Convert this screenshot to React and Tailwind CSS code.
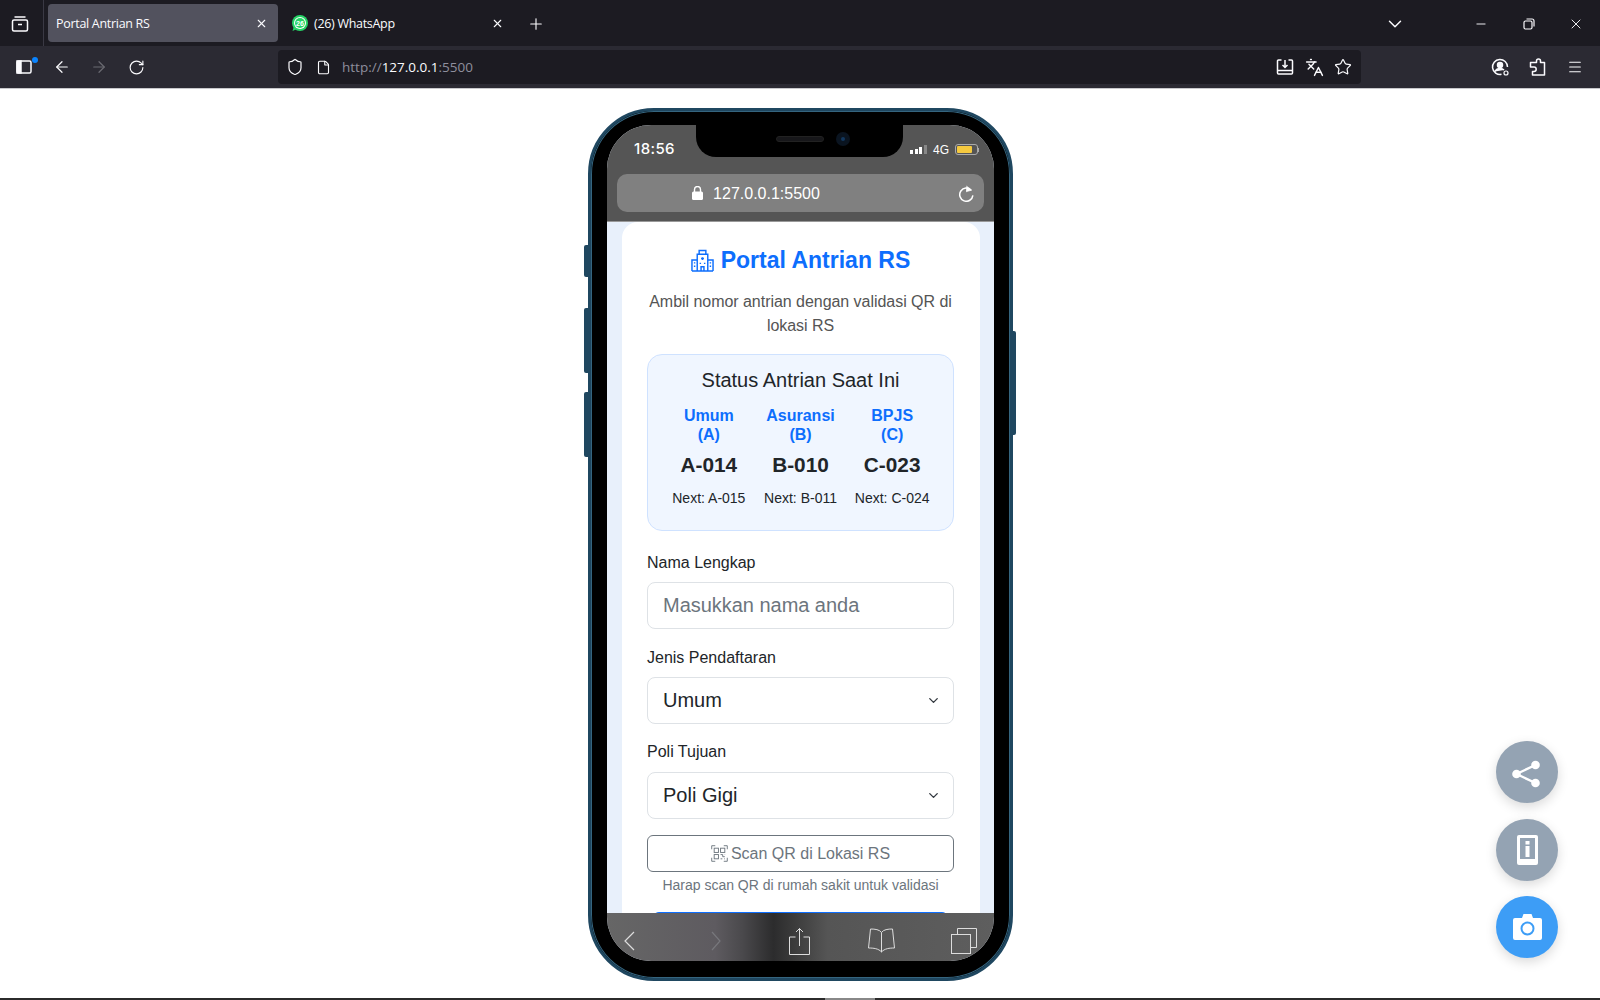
import React from "react";
import { ArrowLeft, ArrowRight, RotateCw, X, Plus, ChevronDown, Star, Menu, Minus, Shield, File, Languages } from "lucide-react";

const Hospital = ({ className }) => (
  <svg viewBox="0 0 24 24" className={className} fill="none" stroke="currentColor" strokeWidth="1.5">
    <path d="M1 23V11.500h5.500M23 23V11.500h-5.500M6.500 23V5.500h11V23M8.500 5.500V1.500h7v4M1 23h22" />
    <path d="M10.500 23v-4.500h3V23M10.500 10h3M12 8.500v3" />
    <path d="M3 14.500h1.500M3 18h1.500M19.500 14.500H21M19.500 18H21M9 15h1.500M13.500 15H15" />
  </svg>
);

const Qr = ({ className }) => (
  <svg viewBox="0 0 24 24" className={className} fill="none" stroke="currentColor" strokeWidth="1.3">
    <path d="M1 6V1h5M18 1h5v5M23 18v5h-5M6 23H1v-5" />
    <rect x="4.500" y="4.500" width="6" height="6" />
    <rect x="13.500" y="4.500" width="6" height="6" />
    <rect x="4.500" y="13.500" width="6" height="6" />
    <path d="M13.500 13.500h3v3h3M13.500 19.500h2.500M19.500 13.500v.5M19.500 19.500h-1" />
  </svg>
);

function TabBar() {
  return (
    <div className="h-[46px] bg-[#1c1b22] flex items-center text-[#fbfbfe] shrink-0">
      <div className="w-[44px] h-full flex items-center justify-center border-r border-[#3a3944] pr-[4px] pt-[1px]">
        <svg viewBox="0 0 18 18" className="w-[18px] h-[18px]" fill="none" stroke="currentColor" strokeWidth="1.5">
          <rect x="1.500" y="5" width="15" height="11" rx="1.500" />
          <path d="M3.500 2h11M7 9.500h4" />
        </svg>
      </div>
      <div className="ml-[4px] w-[230px] h-[38px] rounded-[4px] bg-[#52525e] flex items-center pl-[8px] pr-[10px] justify-between">
        <span className="text-[12.5px] tracking-[-0.3px] pt-[2px]">Portal Antrian RS</span>
        <X className="w-[13px] h-[13px]" strokeWidth={2} />
      </div>
      <div className="w-[236px] h-[38px] flex items-center pl-[13px] pr-[10px]">
        <svg viewBox="0 0 18 18" className="w-[18px] h-[18px] mr-[5px]">
          <circle cx="9" cy="9" r="8" fill="#25d366" />
          <path d="M1.500 17l1.500-5 3 3z" fill="#25d366" />
          <circle cx="9" cy="9" r="6" fill="#fff" />
          <circle cx="9" cy="9" r="5" fill="#25d366" />
          <text x="9" y="11.500" fontSize="7" fontWeight="700" textAnchor="middle" fill="#fff" fontFamily="'Liberation Sans', sans-serif">26</text>
        </svg>
        <span className="text-[12.5px] flex-1 tracking-[-0.3px] pt-[2px]">(26) WhatsApp</span>
        <X className="w-[13px] h-[13px]" strokeWidth={2} />
      </div>
      <Plus className="ml-[13px] w-[18px] h-[18px] mt-[1px]" strokeWidth={1.5} />
      <div className="flex-1" />
      <ChevronDown className="w-[22px] h-[22px] mr-[68px] mt-[1px]" strokeWidth={1.6} />
      <Minus className="w-[14px] h-[14px] mr-[35px] mt-[1px]" strokeWidth={1.6} />
      <svg viewBox="0 0 12 12" className="w-[12px] h-[12px] mr-[33px] mt-[1px]" fill="none" stroke="currentColor" strokeWidth="1.200">
        <rect x="1" y="3" width="8" height="8" rx="1.500" />
        <path d="M3.500 1h5.500a2 2 0 0 1 2 2v5.500" />
      </svg>
      <X className="w-[16px] h-[16px] mr-[16px] mt-[1px]" strokeWidth={1.4} />
    </div>
  );
}

function Toolbar() {
  return (
    <div className="h-[43px] bg-[#2b2a33] flex items-center text-[#fbfbfe] shrink-0 border-b border-[#c8c8cc]">
      <div className="w-[48px] flex items-center justify-center relative">
        <svg viewBox="0 0 16 14" className="w-[16px] h-[14px]" fill="none" stroke="currentColor" strokeWidth="1.500">
          <rect x="1" y="1" width="14" height="12" rx="1.500" />
          <rect x="1" y="1" width="4" height="12" fill="currentColor" />
        </svg>
        <span className="absolute right-[10px] -top-[3px] w-[6px] h-[6px] rounded-full bg-[#0a84ff]" />
      </div>
      <ArrowLeft className="w-[18px] h-[18px] ml-[5px]" strokeWidth={1.6} />
      <ArrowRight className="w-[18px] h-[18px] ml-[19px] text-[#6a6a72]" strokeWidth={1.6} />
      <RotateCw className="w-[17px] h-[17px] ml-[20px]" strokeWidth={1.6} />
      <div className="ml-[133px] w-[1083px] h-[34px] rounded-[4px] bg-[#1c1b22] flex items-center pl-[8px] pr-[9px]">
        <Shield className="w-[18px] h-[18px]" strokeWidth={1.6} />
        <File className="w-[15px] h-[15px] ml-[12px]" strokeWidth={1.8} />
        <span className="ml-[11px] text-[13.5px] text-[#8f8f9d]">http://<span className="text-[#fbfbfe]">127.0.0.1</span>:5500</span>
        <div className="flex-1" />
        <svg viewBox="0 0 18 18" className="w-[18px] h-[18px] mr-[11px]" fill="none" stroke="currentColor" strokeWidth="1.500">
          <path d="M5.500 2H2.500a1 1 0 0 0-1 1v12a1 1 0 0 0 1 1h13a1 1 0 0 0 1-1V3a1 1 0 0 0-1-1h-3M1.500 12.500h15" />
          <path d="M9 2v7M6.500 7L9 9.500 11.500 7" />
        </svg>
        <Languages className="w-[19px] h-[19px] mr-[10px]" strokeWidth={1.8} />
        <Star className="w-[18px] h-[18px]" strokeWidth={1.6} />
      </div>
      <div className="flex-1" />
      <svg viewBox="0 0 20 20" className="w-[20px] h-[20px] mr-[18px]" fill="none" stroke="currentColor" strokeWidth="1.500">
        <path d="M17.500 10a7.500 7.500 0 1 0-6 7.300" />
        <circle cx="10" cy="8" r="2.500" fill="currentColor" />
        <path d="M5 14.500c1-2 3-3 5-3s3 .4 4 1.500" fill="currentColor" />
        <circle cx="16" cy="16" r="2" strokeWidth="1.200" />
      </svg>
      <svg viewBox="0 0 18 18" className="w-[18px] h-[18px] mr-[21px]" fill="none" stroke="currentColor" strokeWidth="1.500" strokeLinejoin="round">
        <path d="M8.500 4.500V3a2 2 0 0 1 4 0v1.500h4V17H4.500v-3.500H6a2.200 2.200 0 0 0 0-4.400H2.500V4.500z" />
      </svg>
      <Menu className="w-[16px] h-[16px] mr-[17px]" strokeWidth={1.6} />
    </div>
  );
}

function StatusCol({ a, b, code, next }) {
  return (
    <div className="flex-1 flex flex-col items-center">
      <div className="text-[16px] leading-[19px] font-bold text-[#0d6efd] text-center">{a}<br />{b}</div>
      <div className="mt-[8px] text-[20.8px] leading-[26px] font-bold text-[#212529]">{code}</div>
      <div className="mt-[10px] text-[14px] leading-[21px] text-[#212529] whitespace-nowrap">{next}</div>
    </div>
  );
}

function Field({ label, children }) {
  return (
    <div>
      <div className="text-[16px] leading-[24px] text-[#212529]">{label}</div>
      {children}
    </div>
  );
}

function Select({ value, mt }) {
  return (
    <div className={"h-[47px] rounded-[8px] border border-[#dee2e6] bg-white flex items-center pl-[15px] pr-[12px] justify-between " + mt}>
      <span className="text-[20px] text-[#212529] pb-[2px]">{value}</span>
      <ChevronDown className="w-[15px] h-[15px] text-[#343a40]" strokeWidth={2.2} />
    </div>
  );
}

function Phone() {
  return (
    <div className="relative ml-[1px] w-[425px] h-[873px] rounded-[66px] bg-black border-[3px] border-[#1f4760] shadow-[inset_0_0_0_1px_#35657f] pl-[16px] pr-[16px] pt-[14px] pb-[17px]">
      <span className="absolute -left-[7px] top-[134px] w-[4px] h-[32px] bg-[#1f4760] rounded-l-[2px]" />
      <span className="absolute -left-[7px] top-[197px] w-[4px] h-[65px] bg-[#1f4760] rounded-l-[2px]" />
      <span className="absolute -left-[7px] top-[281px] w-[4px] h-[65px] bg-[#1f4760] rounded-l-[2px]" />
      <span className="absolute -right-[6px] top-[220px] w-[3px] h-[104px] bg-[#1f4760] rounded-r-[2px]" />
      <div className="relative w-full h-full rounded-[44px] overflow-hidden flex flex-col bg-[#e8f0fb]">
        <div className="h-[97px] shrink-0 bg-[#555555] flex flex-col border-b border-[#999]">
          <div className="h-[49px] flex items-center justify-between pl-[27px] pr-[15px]">
            <span className="font-['Inter',sans-serif] text-[15px] font-medium text-white tracking-[0.4px]">18:56</span>
            <div className="flex items-center gap-[6px]">
              <div className="flex items-end gap-[1.5px] h-[9px]">
                <span className="w-[3px] h-[4px] bg-white" />
                <span className="w-[3px] h-[5.5px] bg-white" />
                <span className="w-[3px] h-[7.5px] bg-white" />
                <span className="w-[3px] h-[9px] bg-[#888]" />
              </div>
              <span className="text-[12px] text-white">4G</span>
              <div className="flex items-center">
                <div className="w-[23px] h-[11px] rounded-[3px] border border-[#aaa] p-[1px]">
                  <div className="w-[15px] h-full bg-[#f5c93f] rounded-[1px]" />
                </div>
                <span className="w-[1px] h-[4px] bg-[#aaa]" />
              </div>
            </div>
          </div>
          <div className="mx-[10px] h-[38px] rounded-[10px] bg-[#808080] flex items-center justify-between pr-[10px]">
            <div className="flex-1 flex items-center justify-center pr-[63px] text-white gap-[10px]">
              <svg viewBox="0 0 11 14" className="w-[11px] h-[14px]" fill="none">
                <rect x="0" y="5.500" width="11" height="8.500" rx="1.500" fill="currentColor" />
                <path d="M2.500 6V3.500a3 3 0 0 1 6 0V6" stroke="currentColor" strokeWidth="1.400" />
              </svg>
              <span className="text-[16px] pt-[1px]">127.0.0.1:5500</span>
            </div>
            <svg viewBox="0 0 17 18" className="w-[16px] h-[17px] text-white" fill="none" stroke="currentColor" strokeWidth="1.600">
              <path d="M14 5.500A7 7 0 1 0 15.800 11" />
              <path d="M9 1l5.500 4.500L8.500 7.200" fill="currentColor" strokeWidth="0.600" />
            </svg>
          </div>
        </div>
        <div className="flex-1 min-h-0 overflow-hidden pl-[15px] pr-[14px]">
          <div className="bg-white rounded-t-[16px] pl-[25px] pr-[26px] pt-[24px] h-full">
            <div className="flex items-center justify-center gap-[7px] text-[#0d6efd]">
              <Hospital className="w-[23px] h-[23px]" />
              <span className="text-[23px] leading-[29px] font-bold">Portal Antrian RS</span>
            </div>
            <p className="mt-[15px] text-[16px] leading-[24px] tracking-[-0.04px] text-[#555] text-center">Ambil nomor antrian dengan validasi QR di lokasi RS</p>
            <div className="mt-[16px] h-[177px] rounded-[15px] bg-[#f0f6ff] border border-[#cfe2ff] px-[15px] pt-[12px]">
              <div className="text-[20px] leading-[26px] text-[#212529] text-center">Status Antrian Saat Ini</div>
              <div className="mt-[13px] flex">
                <StatusCol a="Umum" b="(A)" code="A-014" next="Next: A-015" />
                <StatusCol a="Asuransi" b="(B)" code="B-010" next="Next: B-011" />
                <StatusCol a="BPJS" b="(C)" code="C-023" next="Next: C-024" />
              </div>
            </div>
            <div className="mt-[20px]">
              <Field label="Nama Lengkap">
                <div className="mt-[7px] h-[47px] rounded-[8px] border border-[#dee2e6] bg-white flex items-center pl-[15px]">
                  <span className="text-[20px] tracking-[-0.03px] text-[#6c757d] pb-[1px]">Masukkan nama anda</span>
                </div>
              </Field>
            </div>
            <div className="mt-[17px]"><Field label="Jenis Pendaftaran"><Select value="Umum" mt="mt-[7px]" /></Field></div>
            <div className="mt-[16px]"><Field label="Poli Tujuan"><Select value="Poli Gigi" mt="mt-[8px]" /></Field></div>
            <div className="mt-[16px] h-[37px] rounded-[6px] border border-[#6c757d] flex items-center justify-center gap-[3px] text-[#6c757d]">
              <Qr className="w-[17px] h-[17px]" />
              <span className="text-[16px]">Scan QR di Lokasi RS</span>
            </div>
            <div className="mt-[3px] text-[14px] leading-[21px] text-[#6c757d] text-center">Harap scan QR di rumah sakit untuk validasi</div>
            <div className="mt-[16px] mx-[6px] h-[10px] rounded-t-[6px] bg-[#0d6efd]" />
          </div>
        </div>
        <div className="h-[48px] shrink-0 bg-[linear-gradient(90deg,#666_0%,#5e5b60_28%,#4a494c_35%,#2c2c2d_43%,#3a3a3a_48%,#555_57%,#5e5e5e_100%)] relative z-10 flex items-center pt-[7px] text-[#ddd]">
          <svg viewBox="0 0 11 20" className="w-[11px] h-[20px] ml-[17px] shrink-0" fill="none" stroke="currentColor" strokeWidth="1.200"><path d="M10 1L1 10l9 9" /></svg>
          <svg viewBox="0 0 10 20" className="w-[10px] h-[20px] ml-[76px] shrink-0 text-[#77777c]" fill="none" stroke="currentColor" strokeWidth="1.200"><path d="M1 1l8 9-8 9" /></svg>
          <svg viewBox="0 0 21 28" className="w-[21px] h-[28px] ml-[68px] shrink-0" fill="none" stroke="currentColor" strokeWidth="1"><path d="M6.500 10H.5v17.500h20V10H14.500M10.500 19V1.500M7 5l3.500-3.500L14 5" /></svg>
          <svg viewBox="0 0 27 25" className="w-[27px] h-[25px] ml-[58px] shrink-0" fill="none" stroke="currentColor" strokeWidth="1"><path d="M13.500 4.500C11.500 1.500 7 1 2.500 1L.5 20c5 0 10 .5 13 4 3-3.500 8-4 13-4L24.500 1C20 1 15.500 1.500 13.500 4.500zM13.500 4.500V24" /></svg>
          <svg viewBox="0 0 26 26" className="w-[26px] h-[26px] ml-[56px] shrink-0" fill="none" stroke="currentColor" strokeWidth="1"><rect x=".5" y="6.500" width="19" height="19" /><path d="M6.500 6.500V.5h19v19h-6" /></svg>
        </div>
        <div className="absolute top-0 left-[89px] w-[207px] h-[32px] bg-black rounded-b-[20px] flex items-center justify-center gap-[12px] pl-[27px] pb-[4px]">
          <span className="w-[48px] h-[6px] rounded-full bg-[#17171a] border border-[#222]" />
          <span className="w-[14px] h-[14px] rounded-full bg-[#0a1420] flex items-center justify-center"><span className="w-[4px] h-[4px] rounded-full bg-[#12375e]" /></span>
        </div>
      </div>
    </div>
  );
}

function Fab({ bg, children }) {
  return (
    <div className={"w-[62px] h-[62px] rounded-full flex items-center justify-center shadow-[0_4px_12px_rgba(0,0,0,0.15)] " + bg}>
      {children}
    </div>
  );
}

export default function App() {
  return (
    <div className="w-[1600px] h-[1000px] relative overflow-hidden flex flex-col bg-white font-['Liberation_Sans',Arial,sans-serif]">
      <div className="font-['Open_Sans',sans-serif]">
        <TabBar />
        <Toolbar />
      </div>
      <div className="flex-1 flex justify-center pt-[19px]">
        <Phone />
      </div>
      <div className="h-[2px] bg-[#2b2b2b] shrink-0 flex">
        <span className="ml-[825px] w-[50px] h-full bg-[#888]" />
      </div>
      <div className="absolute left-[1496px] top-[741px] flex flex-col gap-[15.5px]">
        <Fab bg="bg-[#94a3b3]">
          <svg viewBox="0 0 28 28" className="w-[28px] h-[28px] -ml-[3px] mt-[3px]" fill="#fff">
            <circle cx="4.500" cy="14" r="4.300" /><circle cx="23.500" cy="5" r="4.300" /><circle cx="23.500" cy="23" r="4.300" />
            <path d="M4.500 14L23.500 5M4.500 14l19 9" stroke="#fff" strokeWidth="2.400" />
          </svg>
        </Fab>
        <Fab bg="bg-[#94a3b3]">
          <svg viewBox="0 0 21 30" className="w-[21px] h-[30px]">
            <rect x="0" y="0" width="21" height="30" rx="2" fill="#fff" />
            <rect x="3" y="3" width="15" height="21" fill="#94a3b3" />
            <rect x="8.500" y="6" width="4" height="3.500" fill="#fff" />
            <rect x="8.500" y="11" width="4" height="11" fill="#fff" />
          </svg>
        </Fab>
        <Fab bg="bg-[#3d9df6]">
          <svg viewBox="0 0 29 26" className="w-[29px] h-[26px]">
            <path d="M9 4l1.500-4h8L20 4h7a2 2 0 0 1 2 2v18a2 2 0 0 1-2 2H2a2 2 0 0 1-2-2V6a2 2 0 0 1 2-2z" fill="#fff" />
            <circle cx="14.500" cy="14.500" r="6" fill="none" stroke="#3d9df6" strokeWidth="2" />
          </svg>
        </Fab>
      </div>
    </div>
  );
}
